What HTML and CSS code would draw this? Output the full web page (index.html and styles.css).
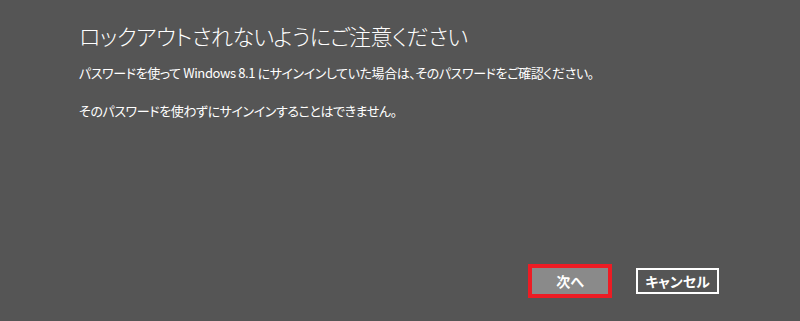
FILE: index.html
```html
<!DOCTYPE html>
<html lang="ja">
<head>
    <meta charset="UTF-8">
    <title>ロックアウトされないようにご注意ください</title>
    <link rel="stylesheet" href="styles.css">
</head>
<body>
    <!-- Lockout warning dialog -->
    <div class="dialog">
        <h1 class="title">ロックアウトされないようにご注意ください</h1>
        <p class="text first">パスワードを使って Windows 8.1 にサインインしていた場合は、そのパスワードをご確認ください。</p>
        <p class="text">そのパスワードを使わずにサインインすることはできません。</p>
        <div class="actions">
            <div class="highlight"><button class="btn next" type="button">次へ</button></div>
            <button class="btn cancel" type="button">キャンセル</button>
        </div>
    </div>
</body>
</html>
```

FILE: styles.css
```css
html, body {
    margin: 0;
    height: 100%;
}

body {
    background: #555555;
    color: #ffffff;
    font-family: "Noto Sans CJK JP", "Noto Sans", sans-serif;
    font-feature-settings: "palt";
}

.dialog {
    height: 100%;
    box-sizing: border-box;
    display: flex;
    flex-direction: column;
    padding: 0 81px 23px 79px;
}

.title {
    margin: 20px 0 0 0;
    font-size: 22px;
    font-weight: 300;
    line-height: 30px;
    letter-spacing: -0.5px;
}

.text {
    margin: 0;
    font-size: 13px;
    line-height: 18px;
    letter-spacing: -0.4px;
}

.text.first {
    margin-top: 14px;
    margin-bottom: 20px;
}

.actions {
    margin-top: auto;
    display: flex;
    justify-content: flex-end;
    align-items: center;
    gap: 24px;
}

.highlight {
    border: 4px solid #ed1c24;
}

.btn {
    font-family: inherit;
    font-feature-settings: "palt";
    font-size: 14px;
    font-weight: bold;
    color: #ffffff;
    height: 26px;
    padding: 0;
    cursor: pointer;
}

.next {
    display: block;
    width: 76px;
    background: #8a8a8a;
    border: 1px solid #8a8a8a;
}

.cancel {
    width: 83px;
    background: #555555;
    border: 2px solid #ffffff;
}
```
